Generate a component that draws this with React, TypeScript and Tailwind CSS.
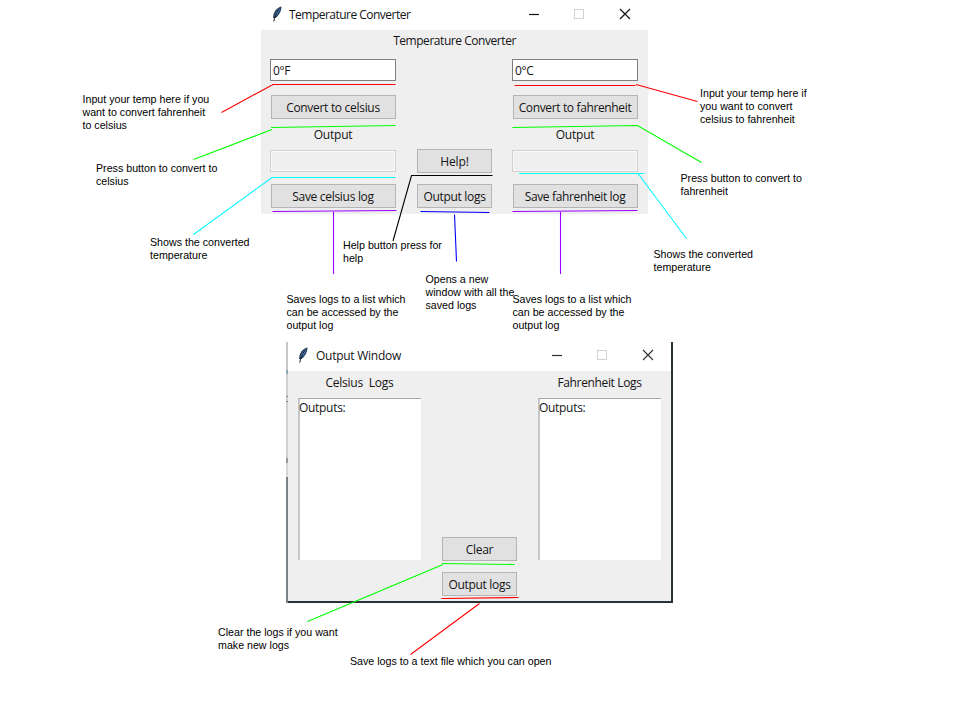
import type { ReactNode } from 'react';

const UI = "font-['Open_Sans','Noto_Sans',sans-serif] text-[12px] leading-[16px] text-[#141414] whitespace-pre";

function Feather() {
  return (
    <svg width="12" height="18" viewBox="0 0 12 18" className="shrink-0">
      <path d="M10.500 1.500C7 2 3.500 5.500 2.500 9.500L2 13l2 .3C7.500 11 10.500 6.500 10.500 1.500z" fill="#27405f" />
      <path d="M8.800 3.500C6 5 4 8.500 3.500 11.500 6.500 9.500 8.500 7 8.800 3.500z" fill="#5f9ade" />
      <path d="M8 4.500C5 8.500 3.500 12 2.800 16.500" fill="none" stroke="#15191f" strokeWidth="1" />
    </svg>
  );
}

function Controls({ color }: { color: string }) {
  return (
    <svg width="104" height="14" viewBox="0 0 104 14" fill="none" className="-mt-0.5 shrink-0">
      <path d="M1 7.500h10" stroke={color} strokeWidth="1.200" />
      <rect x="46.500" y="2.500" width="9" height="9" stroke="#d2d2d2" />
      <path d="M92 2l10 10M102 2L92 12" stroke={color} strokeWidth="1.200" />
    </svg>
  );
}

function Button({ children, width, tracking = '' }: { children: ReactNode; width: string; tracking?: string }) {
  return (
    <button className={`${UI} ${width} ${tracking} flex h-6 items-center justify-center border border-[#b4b4b4] bg-[#e1e1e1] pt-px`}>
      {children}
    </button>
  );
}

function ConverterColumn({ value, convert, save, ct, st }: { value: string; convert: string; save: string; ct: string; st: string }) {
  return (
    <div className="flex w-[126px] flex-col items-center">
      <div className={`${UI} flex h-[22px] w-full items-center border border-[#7f7f7f] bg-white pl-[2px] pt-px tracking-[-0.4px]`}>{value}</div>
      <div className="mt-[14px] flex"><Button width="w-[125px]" tracking={ct}>{convert}</Button></div>
      <div className={`${UI} mt-[8px] h-4 tracking-[-0.2px]`}>Output</div>
      <div className="mt-[7px] h-[22px] w-full border border-[#d0d0d0] bg-[#efefef] shadow-[inset_0_0_0_1px_#f8f8f8]" />
      <div className="mt-3 flex"><Button width="w-[125px]" tracking={st}>{save}</Button></div>
    </div>
  );
}

function ConverterWindow() {
  return (
    <section className="absolute left-[261px] top-0 flex h-[214px] w-[387px] flex-col bg-[#efefef]">
      <header className="flex h-[30px] items-center justify-between bg-white pl-[10px] pr-[16px]">
        <div className="flex items-center gap-[6px]">
          <span className="-mt-0.5"><Feather /></span>
          <span className={`${UI} tracking-[-0.52px]`}>Temperature Converter</span>
        </div>
        <Controls color="#111" />
      </header>
      <div className={`${UI} mt-[3px] text-center tracking-[-0.45px]`}>Temperature Converter</div>
      <div className="mt-[10px] flex pl-[9px]">
        <ConverterColumn value="0°F" convert="Convert to celsius" save="Save celsius log" ct="tracking-[-0.3px]" st="tracking-[-0.3px]" />
        <div className="ml-[21px] mr-5 flex w-[75px] flex-col justify-end gap-[11px]">
          <Button width="w-[75px]" tracking="tracking-[-0.1px]">Help!</Button>
          <Button width="w-[75px]" tracking="tracking-[-0.3px]">Output logs</Button>
        </div>
        <ConverterColumn value="0°C" convert="Convert to fahrenheit" save="Save fahrenheit log" ct="tracking-[-0.36px]" st="tracking-[-0.36px]" />
      </div>
    </section>
  );
}

function LogColumn({ title, tracking }: { title: string; tracking: string }) {
  return (
    <div className="flex w-[123px] flex-col">
      <div className={`${UI} ${tracking} h-4 text-center`}>{title}</div>
      <div className={`${UI} mt-[7px] h-[162px] border-l-2 border-t border-l-[#c6c6c6] border-t-[#a8a8a8] bg-white tracking-[-0.3px]`}>
        <span className="-ml-px block pt-px">Outputs:</span>
      </div>
    </div>
  );
}

function OutputWindow() {
  return (
    <section className="absolute left-[286px] top-[342px] flex h-[261px] w-[387px]">
      <div className="flex w-[2px] flex-col">
        <div className="h-[28px] bg-[#c6c8c8]" />
        <div className="h-[4px] bg-[#8fa9b4]" />
        <div className="h-[22px] bg-[#cfd1d1]" />
        <div className="h-px bg-[#808080]" />
        <div className="h-[4px] bg-[#cfd1d1]" />
        <div className="h-px bg-[#808080]" />
        <div className="h-[56px] bg-[#cfd1d1]" />
        <div className="h-[5px] bg-[#9a9696]" />
        <div className="h-[14px] bg-[#d5d7d7]" />
        <div className="flex-1 bg-[#7b8285]" />
      </div>
      <div className="flex flex-1 flex-col border-b-2 border-r-2 border-b-[#293237] border-r-[#293237] bg-[#efefef]">
        <header className="flex h-[29px] items-center justify-between bg-white pb-px pl-[10px] pr-[16px]">
          <div className="flex items-center gap-[6px]">
            <span className="-mt-0.5 -ml-px mr-px"><Feather /></span>
            <span className={`${UI} tracking-[-0.26px]`}>Output Window</span>
          </div>
          <Controls color="#333" />
        </header>
        <div className="flex pl-[10px] pt-[4px]">
          <LogColumn title="Celsius  Logs" tracking="tracking-[-0.24px]" />
          <div className="ml-[21px] mr-[21px] mt-[162px] flex w-[75px] flex-col gap-[11px]">
            <Button width="w-[75px]" tracking="tracking-[-0.3px]">Clear</Button>
            <Button width="w-[75px]" tracking="tracking-[-0.3px]">Output logs</Button>
          </div>
          <LogColumn title="Fahrenheit Logs" tracking="tracking-[-0.36px]" />
        </div>
      </div>
    </section>
  );
}

function Note({ at, lines }: { at: string; lines: string[] }) {
  return (
    <p className={`${at} absolute whitespace-nowrap font-['Liberation_Sans',Arial,sans-serif] text-[10.67px] leading-[13px] text-black`}>
      {lines.map((line) => <span key={line} className="block">{line}</span>)}
    </p>
  );
}

const connectors: [string, string][] = [
  ['#ff0000', 'M221.500 112.500L273 84.500M272 84.500H395.500'],
  ['#ff0000', 'M514.500 85.500H635.500M636 84.500L697.500 101.500'],
  ['#00ff00', 'M193.500 159.500L272 129.500M271 127.500L395.500 125.500'],
  ['#00ff00', 'M512.500 127.500L637.500 125.500L701.500 162.500'],
  ['#00ffff', 'M193.500 234.500L272 177.500H395.500'],
  ['#00ffff', 'M519 173.500H644.500M638 173.500L686.500 238.500'],
  ['#9900ff', 'M272.500 211.500L396.500 210.500M333.500 212V274'],
  ['#9900ff', 'M512.500 211.500L637.500 210.500M560.500 212V274'],
  ['#000000', 'M393 241L411.500 175.500H492.500'],
  ['#0000ff', 'M420.500 211.500L489.500 212.500M454.500 214.500L456.500 261.500'],
  ['#00ff00', 'M307.500 621.500L443 564.500M442 563.500L514.500 564.500'],
  ['#ff0000', 'M441.500 598.500L518.500 597.500M479.500 603.500L410.500 654.500'],
];

export default function App() {
  return (
    <main className="relative h-[720px] w-[960px] overflow-hidden bg-white">
      <ConverterWindow />
      <OutputWindow />
      <svg className="absolute inset-0" width="960" height="720" fill="none">
        {connectors.map(([color, d]) => <path key={d} d={d} stroke={color} strokeWidth="1.100" />)}
      </svg>
      <Note at="left-[82.5px] top-[93px]" lines={['Input your temp here if you', 'want to convert fahrenheit', 'to celsius']} />
      <Note at="left-[96px] top-[162px]" lines={['Press button to convert to', 'celsius']} />
      <Note at="left-[150px] top-[236px]" lines={['Shows the converted', 'temperature']} />
      <Note at="left-[700px] top-[87px]" lines={['Input your temp here if', 'you want to convert', 'celsius to fahrenheit']} />
      <Note at="left-[680.5px] top-[172px]" lines={['Press button to convert to', 'fahrenheit']} />
      <Note at="left-[653.5px] top-[248px]" lines={['Shows the converted', 'temperature']} />
      <Note at="left-[343px] top-[239px]" lines={['Help button press for', 'help']} />
      <Note at="left-[286.5px] top-[293px]" lines={['Saves logs to a list which', 'can be accessed by the', 'output log']} />
      <Note at="left-[425.5px] top-[273px]" lines={['Opens a new', 'window with all the', 'saved logs']} />
      <Note at="left-[512.5px] top-[293px]" lines={['Saves logs to a list which', 'can be accessed by the', 'output log']} />
      <Note at="left-[218px] top-[626px]" lines={['Clear the logs if you want', 'make new logs']} />
      <Note at="left-[350px] top-[655px]" lines={['Save logs to a text file which you can open']} />
    </main>
  );
}
